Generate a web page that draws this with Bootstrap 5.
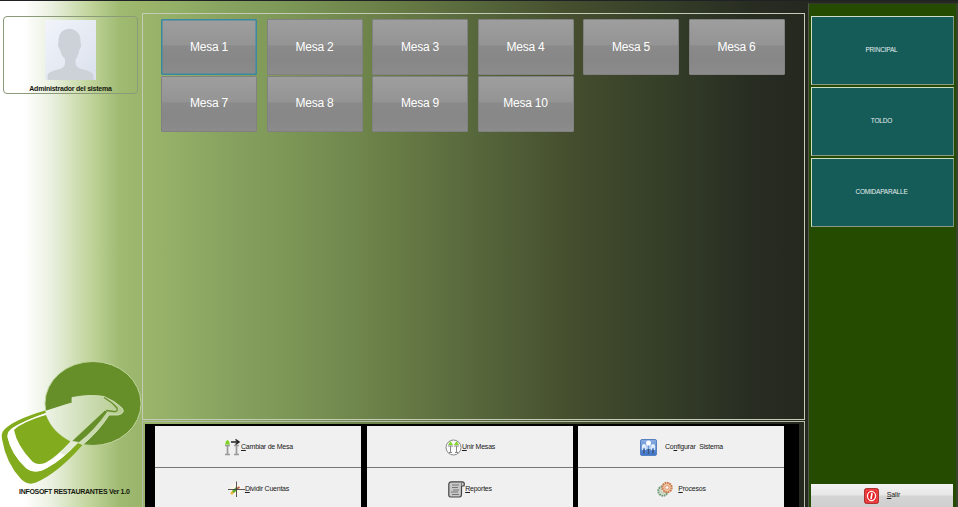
<!DOCTYPE html>
<html lang="es">
<head>
<meta charset="utf-8">
<meta name="viewport" content="width=device-width, initial-scale=1">
<title>Infosoft Restaurantes</title>
<link href="https://cdn.jsdelivr.net/npm/bootstrap@5.3.0/dist/css/bootstrap.min.css" rel="stylesheet">
<style>
body{font-family:"Liberation Sans",Arial,sans-serif;color:#16180f}
.app{height:507px;width:958px;border-top:1px solid #202124;background:linear-gradient(90deg,#fff 0,#fff 24px,#e9f0df 52px,#c3d69e 88px,#9fba71 120px,#9ab56a 148px,#87a25f 230px,#7a9455 300px,#677b45 400px,#56663b 480px,#454e2e 570px,#353f28 660px,#282d22 750px,#25281f 800px,#25281f 100%)}
.side{width:142px;padding:15px 0 0 3px}
.user-box{width:135px;height:78px;border:1px solid #8b9a78;border-radius:4px;padding-top:3px}
.user-box svg{width:51px;height:60px}
.caption{font-size:7px;font-weight:700;line-height:9px;white-space:nowrap;letter-spacing:-.22px}
.logo{width:142px;height:128px;margin-left:-3px}
.version{letter-spacing:-.29px;padding-left:16px;margin-bottom:11px}
.center{width:663px;padding-top:12px}
.tables{height:407px;border:1px solid #c4cbb7;padding:5px 0 0 18px}
.mesas{display:grid;grid-template-columns:repeat(6,96px);column-gap:9.5px;row-gap:0;grid-auto-rows:56.5px}
.mesa{height:56px;border:1px solid #808180;border-radius:1px;padding:0 0 1px 0;color:#fff;font-size:12px;letter-spacing:-.2px;background:linear-gradient(#9e9e9e 0,#949494 46%,#8a8a8a 48%,#878787 75%,#8b8b8b 100%)}
.mesa.sel,.mesa.sel:hover{border:1px solid #3a87a2;box-shadow:inset 0 0 0 .5px #3a87a2}
.actions-frame{height:86px;margin-top:1px;border:1px solid #b5bba9;border-bottom:0;padding:2px 5px 0 2px}
.actions{height:83px;background:#000;padding:2px 15px 0 10px;display:grid;grid-template-columns:206px 206px 206px;column-gap:5.5px;grid-template-rows:42px 42px;row-gap:0}
.act{background:#f0f0f0;font-size:7px;color:#202020;letter-spacing:-.22px;white-space:nowrap;border:0;border-radius:0;padding:1px 0 0 1px;border-bottom:1px solid #777}
.act svg{width:17px;height:17px;flex:none}
.cfg{word-spacing:2px}
u{text-underline-offset:1px;text-decoration-thickness:.6px}
.zones{width:150px;margin:2px 0 0 3px;background:#254b00;border-left:1px solid #53564b;border-right:2px solid #38452a;border-top:1px solid #34382c;padding:12px 2px 0 2px}
.zone{width:143px;height:69px;margin-bottom:2px;background:#155c59;border:1px solid;border-color:#d0ddc9 #7f9180 #8b9a88 #d0ddc9;border-radius:0;color:#e5eded;font-size:6.5px;letter-spacing:-.2px;word-spacing:-1.3px;padding:0 2px 2px 0}
.exit{width:142px;height:23px;border:0;border-radius:0;background:linear-gradient(#f3f3f3,#e7e7e7 48%,#d5d5d5 52%,#cfcfcf);font-size:7px;letter-spacing:-.1px;color:#222;padding:0}
</style>
</head>
<body class="m-0 overflow-hidden">
<div class="app d-flex">
  <aside class="side d-flex flex-column flex-shrink-0">
    <div class="user-box d-flex flex-column align-items-center">
      <svg viewBox="0 0 51 59" preserveAspectRatio="none"><defs><linearGradient id="ph" x2="1" y2="1"><stop stop-color="#f1f4fa"/><stop offset="1" stop-color="#dbe1ed"/></linearGradient></defs><rect width="51" height="59" fill="url(#ph)"/><path d="M2.500 59V54Q4 51 12 49Q20 47 20 43V38Q16 35 15 29Q12 26 13.500 22Q13 9 25 8.500Q36 10 35.500 22Q37 26 34.500 29Q33 36 30.500 39V43Q31 47 39 49Q47 51 48.500 54V59Z" fill="#cdd2d8"/></svg>
      <div class="caption mt-auto">Administrador del sistema</div>
    </div>
    <svg class="logo mt-auto" viewBox="0 359 142 128">
      <defs><linearGradient id="lt" gradientUnits="userSpaceOnUse" x1="44" x2="125" y1="0" y2="0"><stop stop-color="#eff4e8"/><stop offset=".5" stop-color="#cfdeb7"/><stop offset="1" stop-color="#b4cb8e"/></linearGradient></defs>
      <ellipse cx="93" cy="403.500" rx="48" ry="42" fill="#668e29" stroke="#c1d69e" stroke-width="1"/>
      <path d="M45 411Q60 406 72 402.500V397.500Q90 394 104 396.500Q115 401 122 408Q126 413 118 415H109Q99 431 82.500 445L78 444L71 441.500Q52 432 46 414Z" fill="url(#lt)"/>
      <path d="M72 402.500V397.500Q90 394 104 396.500Q115 401 122 408Q126 413 118 415H109Q99 431 82.500 445" fill="none" stroke="#dce8c9" stroke-width=".8"/>
      <path d="M45 410.500Q13 420 4 430Q1 433 2 439Q6 463 21 479Q28 486 36 482.500Q58 473 82.500 445L77.500 443Q62 460 47 468Q35 475 26 468Q11 454 7.500 437Q7 431 14 427Q26 420 46 413Z" fill="#83ab1e"/>
      <path d="M46 413Q26 420 14 427Q7 431 7.500 437Q11 454 26 468Q35 475 47 468Q62 460 77.500 443L70.500 441.500Q62 451 52 460L46 414Z" fill="#fff"/>
      <path d="M46 415Q22 422 14 430Q17 445 31 460Q36 466 45 463Q55 458 70.500 441.500Q52 432 46 415Z" fill="#83ab1e"/>
      <path d="M60 453L71 441.500L78 443L65 455Z" fill="#e3ecd5"/>
      <path d="M72 441L105 410L107.500 412Q95 430 79 442.500Z" fill="#668e29" stroke="#dce8c9" stroke-width=".6"/>
      <path d="M104 397.500Q112 402 117 408Q118 412 114 411.500L106 410.500" fill="none" stroke="#668e29" stroke-width="1.300"/>
    </svg>
    <div class="caption version">INFOSOFT RESTAURANTES Ver 1.0</div>
  </aside>

  <main class="center flex-shrink-0">
    <section class="tables">
      <div class="mesas">
        <button class="btn mesa sel">Mesa 1</button><button class="btn mesa">Mesa 2</button><button class="btn mesa">Mesa 3</button><button class="btn mesa">Mesa 4</button><button class="btn mesa">Mesa 5</button><button class="btn mesa">Mesa 6</button>
        <button class="btn mesa">Mesa 7</button><button class="btn mesa">Mesa 8</button><button class="btn mesa">Mesa 9</button><button class="btn mesa">Mesa 10</button>
      </div>
    </section>
    <section class="actions-frame">
      <div class="actions">
        <button class="btn act d-flex align-items-center justify-content-center"><svg viewBox="0 0 17 17"><path d="M1 6.500h5M3.500 7v8M1 15.500h5M10 6.500h5M12.500 7v8M10 15.500h5" stroke="#999" stroke-width="1.700" fill="none"/><path d="M1 5.500L2 2.500Q3.500-.5 5 2.500L6 5.500Z" fill="#7ed321"/><path d="M7 3h8M11.500.5L15 3l-3.500 2.500" stroke="#222" stroke-width="1.500" fill="none"/></svg><span><u>C</u>ambiar de Mesa</span></button>
        <button class="btn act d-flex align-items-center justify-content-center"><svg viewBox="0 0 17 17"><circle cx="8.500" cy="8.500" r="7.500" fill="#fafafa" stroke="#888"/><path d="M3 7h5M5.500 7v6M4 13.500h3M9 7h5M11.500 7v6M10 13.500h3" stroke="#888" fill="none"/><path d="M3 6l2.500-4L8 6ZM9 6l2.500-4L14 6Z" fill="#82d52a"/></svg><span><u>U</u>nir Mesas</span></button>
        <button class="btn act d-flex align-items-center justify-content-center"><svg viewBox="0 0 17 17"><defs><linearGradient id="bl" y2="1" x2="0"><stop stop-color="#8caee2"/><stop offset="1" stop-color="#3c75cc"/></linearGradient></defs><rect x=".5" y=".5" width="16" height="16" rx="1.500" fill="url(#bl)" stroke="#5780be"/><path d="M2.500 7v4M5.500 8v3M7 6v4M10 6v4M11.500 8v3M14.500 7v4" stroke="#dbe9fc" stroke-width="1.300"/><circle cx="8.500" cy="4" r="2.500" fill="#fff"/><circle cx="4" cy="7" r="2" fill="#e6effc"/><circle cx="13" cy="7" r="2" fill="#e6effc"/><path d="M4 10.500v4M8.500 10v5M13 10.500v4" stroke="#405477" stroke-width="1.500"/></svg><span class="cfg ps-1 ms-1">Co<u>n</u>figurar Sistema</span></button>
        <button class="btn act d-flex align-items-center justify-content-center"><svg viewBox="0 0 17 17"><circle cx="8" cy="8" r="6" fill="#faf6ee"/><path d="M3 13l4-4" stroke="#e6b640" stroke-width="2.500"/><path d="M5 11l4-4" stroke="#58a832" stroke-width="2.500"/><path d="M8.500 8l3-2" stroke="#bc6043" stroke-width="2"/><path d="M8.500 .5v15.500M0 8.500h17" stroke="#444" stroke-width=".9"/></svg><span><u>D</u>ividir Cuentas</span></button>
        <button class="btn act d-flex align-items-center justify-content-center"><svg viewBox="0 0 17 17"><path d="M3 .8H14.500Q17 1 16 5H13.500V13Q13.500 16 11.500 16H2.500Q.5 16 .8 13V3Q1 1 3 .8Z" fill="#c8c8c8" stroke="#444" stroke-width="1.200"/><path d="M13.500 5V2Q13.500 1 14.500 1M4 4h7M4 6.500h6M5 9h6M3 11h7M4 13.500h7" stroke="#777" fill="none"/></svg><span><u>R</u>eportes</span></button>
        <button class="btn act d-flex align-items-center justify-content-center"><svg viewBox="0 0 17 17"><circle cx="6" cy="10" r="4.700" fill="#dbe6d3" stroke="#719b78" stroke-width="2" stroke-dasharray="1.700 .7"/><circle cx="6" cy="10" r="2" fill="#f5f5ee" stroke="#89a68a" stroke-width=".6"/><circle cx="10" cy="6.500" r="4.700" fill="#f3c7a5" stroke="#c87a4b" stroke-width="2" stroke-dasharray="1.700 .7"/><circle cx="10" cy="6.500" r="2" fill="#fff3e9" stroke="#ca845d" stroke-width=".7"/></svg><span class="ms-1"><u>P</u>rocesos</span></button>
      </div>
    </section>
  </main>

  <nav class="zones d-flex flex-column flex-shrink-0">
    <button class="btn zone">PRINCIPAL</button>
    <button class="btn zone">TOLDO</button>
    <button class="btn zone">COMIDA PARA LLE</button>
    <button class="btn exit mt-auto d-flex align-items-center justify-content-center gap-2"><svg width="15" height="16" viewBox="0 0 15 16"><rect x=".5" y=".5" width="14" height="15" rx="2" fill="#e51d20" stroke="#a93332"/><rect x="2" y="2" width="11" height="12" rx="1" fill="none" stroke="#ff8e8b" stroke-width=".6"/><ellipse cx="7.500" cy="8" rx="4" ry="4.700" fill="none" stroke="#fff" stroke-width="1.200"/><path d="M8 5l-1 6" stroke="#fff" stroke-width="1.700"/></svg><span><u>S</u>alir</span></button>
  </nav>
</div>
<script src="https://cdn.jsdelivr.net/npm/bootstrap@5.3.0/dist/js/bootstrap.bundle.min.js"></script>
</body>
</html>
